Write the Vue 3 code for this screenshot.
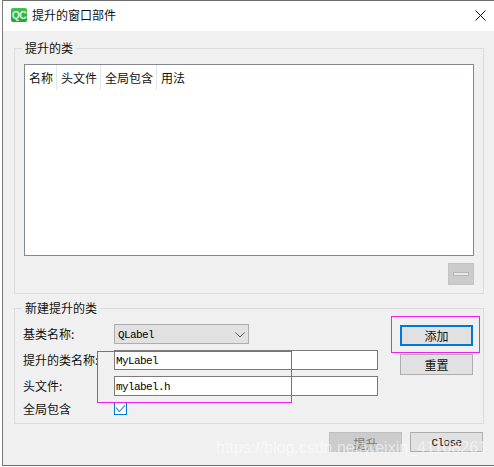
<template>
  <div class="page">
    <div class="window">
      <header class="titlebar">
        <span class="logo">QC</span>
        <span class="title">提升的窗口部件</span>
        <svg class="close" width="11" height="11" viewBox="0 0 11 11" aria-hidden="true">
          <path d="M.5.5 10.5 10.5M10.5.5 .5 10.5" stroke="#111" stroke-width="1" fill="none" />
        </svg>
      </header>

      <main class="body">
        <fieldset class="group top-group">
          <legend>提升的类</legend>
          <div class="list">
            <div class="list-head">
              <span v-for="c in columns" :key="c" class="col">{{ c }}</span>
            </div>
          </div>
          <div class="minus-row">
            <button class="minus" type="button"><i></i></button>
          </div>
        </fieldset>

        <fieldset class="group new-group">
          <legend>新建提升的类</legend>
          <div class="new-grid">
            <div class="form">
              <label>基类名称:</label>
              <div class="combo">
                <span>QLabel</span>
                <svg width="10" height="6" viewBox="0 0 10 6" aria-hidden="true">
                  <path d="M.5 .5 5 5 9.5 .5" stroke="#555" fill="none" />
                </svg>
              </div>
              <label>提升的类名称:</label>
              <div class="input">MyLabel</div>
              <label>头文件:</label>
              <div class="input">mylabel.h</div>
              <label class="check-label">全局包含</label>
              <div class="check">
                <svg width="13" height="13" viewBox="0 0 13 13" aria-hidden="true">
                  <path d="M2 5.7 5.3 9.7 11 3.3" stroke="#4a90c8" stroke-width="1.2" fill="none" />
                </svg>
              </div>
            </div>
            <div class="side">
              <button class="btn default" type="button">添加</button>
              <button class="btn" type="button">重置</button>
            </div>
          </div>
        </fieldset>

        <footer class="actions">
          <button class="btn disabled" type="button">提升</button>
          <button class="btn latin" type="button">Close</button>
        </footer>
      </main>
    </div>

    <div class="mark mark-form"></div>
    <div class="mark mark-add"></div>
    <div class="watermark">https://blog.csdn.net/weixin_41108261</div>
  </div>
</template>

<script setup>
const columns = ['名称', '头文件', '全局包含', '用法']
</script>

<style>
html, body { margin: 0; background: #fff; }
</style>

<style scoped>
.page {
  position: relative;
  width: 494px;
  height: 467px;
  overflow: hidden;
  background: #fff;
  font-family: "Noto Sans CJK SC", "Liberation Sans", sans-serif;
  font-size: 12px;
  color: #111;
}
.window {
  box-sizing: border-box;
  margin-left: 2px;
  width: 492px;
  height: 466px;
  border-top: 1px solid #6f6f6f;
  border-left: 1px solid #7a7a7a;
  border-bottom: 1px solid #6f6f6f;
  display: flex;
  flex-direction: column;
}
.titlebar {
  height: 30px;
  flex: none;
  display: flex;
  align-items: center;
  background: #fff;
  padding: 0 8px 2px;
  box-sizing: border-box;
}
.logo {
  width: 16px;
  height: 14px;
  background: linear-gradient(#45c04f, #22a63a);
  border-radius: 2px;
  color: #d8f5da;
  font: bold 10.5px/14px "Liberation Sans", sans-serif;
  text-align: center;
  letter-spacing: -0.5px;
}
.title {
  margin-left: 5px;
  font-size: 12px;
  line-height: 16px;
  flex: 1;
}
.body {
  flex: 1;
  background: #f0f0f0;
  padding: 17px 10px 0 11px;
  display: flex;
  flex-direction: column;
  min-height: 0;
}
.group {
  margin: 0;
  padding: 0;
  border: 1px solid #dcdcdc;
  position: relative;
}
.group legend {
  margin-left: 7px;
  padding: 0 3px;
  font-size: 12px;
  line-height: 16px;
  height: 16px;
}
.top-group {
  box-sizing: border-box;
  height: 254px;
  padding-top: 8px;
  margin-top: -8px;
}
.list {
  height: 192px;
  margin: 0 9px;
  box-sizing: border-box;
  background: #fff;
  border: 1px solid #828790;
}
.list-head { display: flex; height: 25px; }
.col {
  padding: 0 4px;
  line-height: 25px;
  font-size: 12px;
  box-shadow: inset -1px 0 0 #e5e5e5;
}
.col:last-child { box-shadow: none; }
.minus-row { display: flex; justify-content: flex-end; margin: 7px 9px 0 0; }
.minus {
  width: 26px;
  height: 22px;
  padding: 0;
  background: #cbcbcb;
  border: 1px solid #c4c4c4;
  display: flex;
  align-items: center;
  justify-content: center;
}
.minus i {
  display: block;
  width: 16px;
  height: 4px;
  background: #e8e8e8;
  border: 1px solid #b5b5b5;
  box-sizing: border-box;
}
.new-group {
  box-sizing: border-box;
  height: 124px;
  margin-top: 6px;
}
.new-grid { display: flex; justify-content: space-between; margin: 0 10px 0 8px; }
.form {
  width: 355px;
  display: grid;
  grid-template-columns: 91px 264px;
  grid-template-rows: 20px 20px 20px 13px;
  row-gap: 6px;
  align-items: center;
  padding-top: 8px;
}
.form label { font-size: 12px; line-height: 16px; white-space: nowrap; }
.combo, .input {
  box-sizing: border-box;
  height: 20px;
  font-family: "Liberation Mono", "DejaVu Sans Mono", monospace;
  font-size: 11px;
  letter-spacing: -0.6px;
  color: #000;
}
.combo {
  width: 135px;
  background: #e1e1e1;
  border: 1px solid #adadad;
  display: flex;
  align-items: center;
  justify-content: space-between;
  padding: 1px 3px 0 3px;
}
.input {
  background: #fff;
  border: 1px solid #7a7a7a;
  line-height: 20px;
  padding-left: 1px;
}
.check {
  box-sizing: border-box;
  width: 13px;
  height: 13px;
  margin-top: -1px;
  background: #fff;
  border: 1px solid #0078d7;
  display: flex;
  align-items: center;
  justify-content: center;
}
.check svg { flex: none; }
.side {
  width: 73px;
  display: flex;
  flex-direction: column;
  gap: 8px;
  padding-top: 9px;
}
.side .btn { height: 21px; }
.btn {
  box-sizing: border-box;
  width: 73px;
  height: 20px;
  padding: 0;
  background: #e1e1e1;
  border: 1px solid #adadad;
  font: 12px/18px "Noto Sans CJK SC", "Liberation Sans", sans-serif;
  color: #111;
}
.default { border: 2px solid #0078d7; line-height: 16px; }
.actions {
  display: flex;
  justify-content: flex-end;
  gap: 8px;
  margin: 8px 1px 0 0;
}
.disabled { background: #cccccc; border-color: #bfbfbf; color: #777; padding-top: 2px; }
.latin { font: 11px/18px "Liberation Mono", monospace; letter-spacing: -0.6px; padding-top: 1px; }
.mark { position: absolute; box-sizing: border-box; border: 1px solid #f01ff0; }
.mark-form { left: 97px; top: 351px; width: 195px; height: 52px; }
.mark-add { left: 391px; top: 316px; width: 89px; height: 37px; }
.watermark {
  position: absolute;
  left: 216px;
  top: 438px;
  font: 16px/20px "Liberation Sans", sans-serif;
  color: rgba(255, 255, 255, 0.55);
  white-space: nowrap;
}
</style>
